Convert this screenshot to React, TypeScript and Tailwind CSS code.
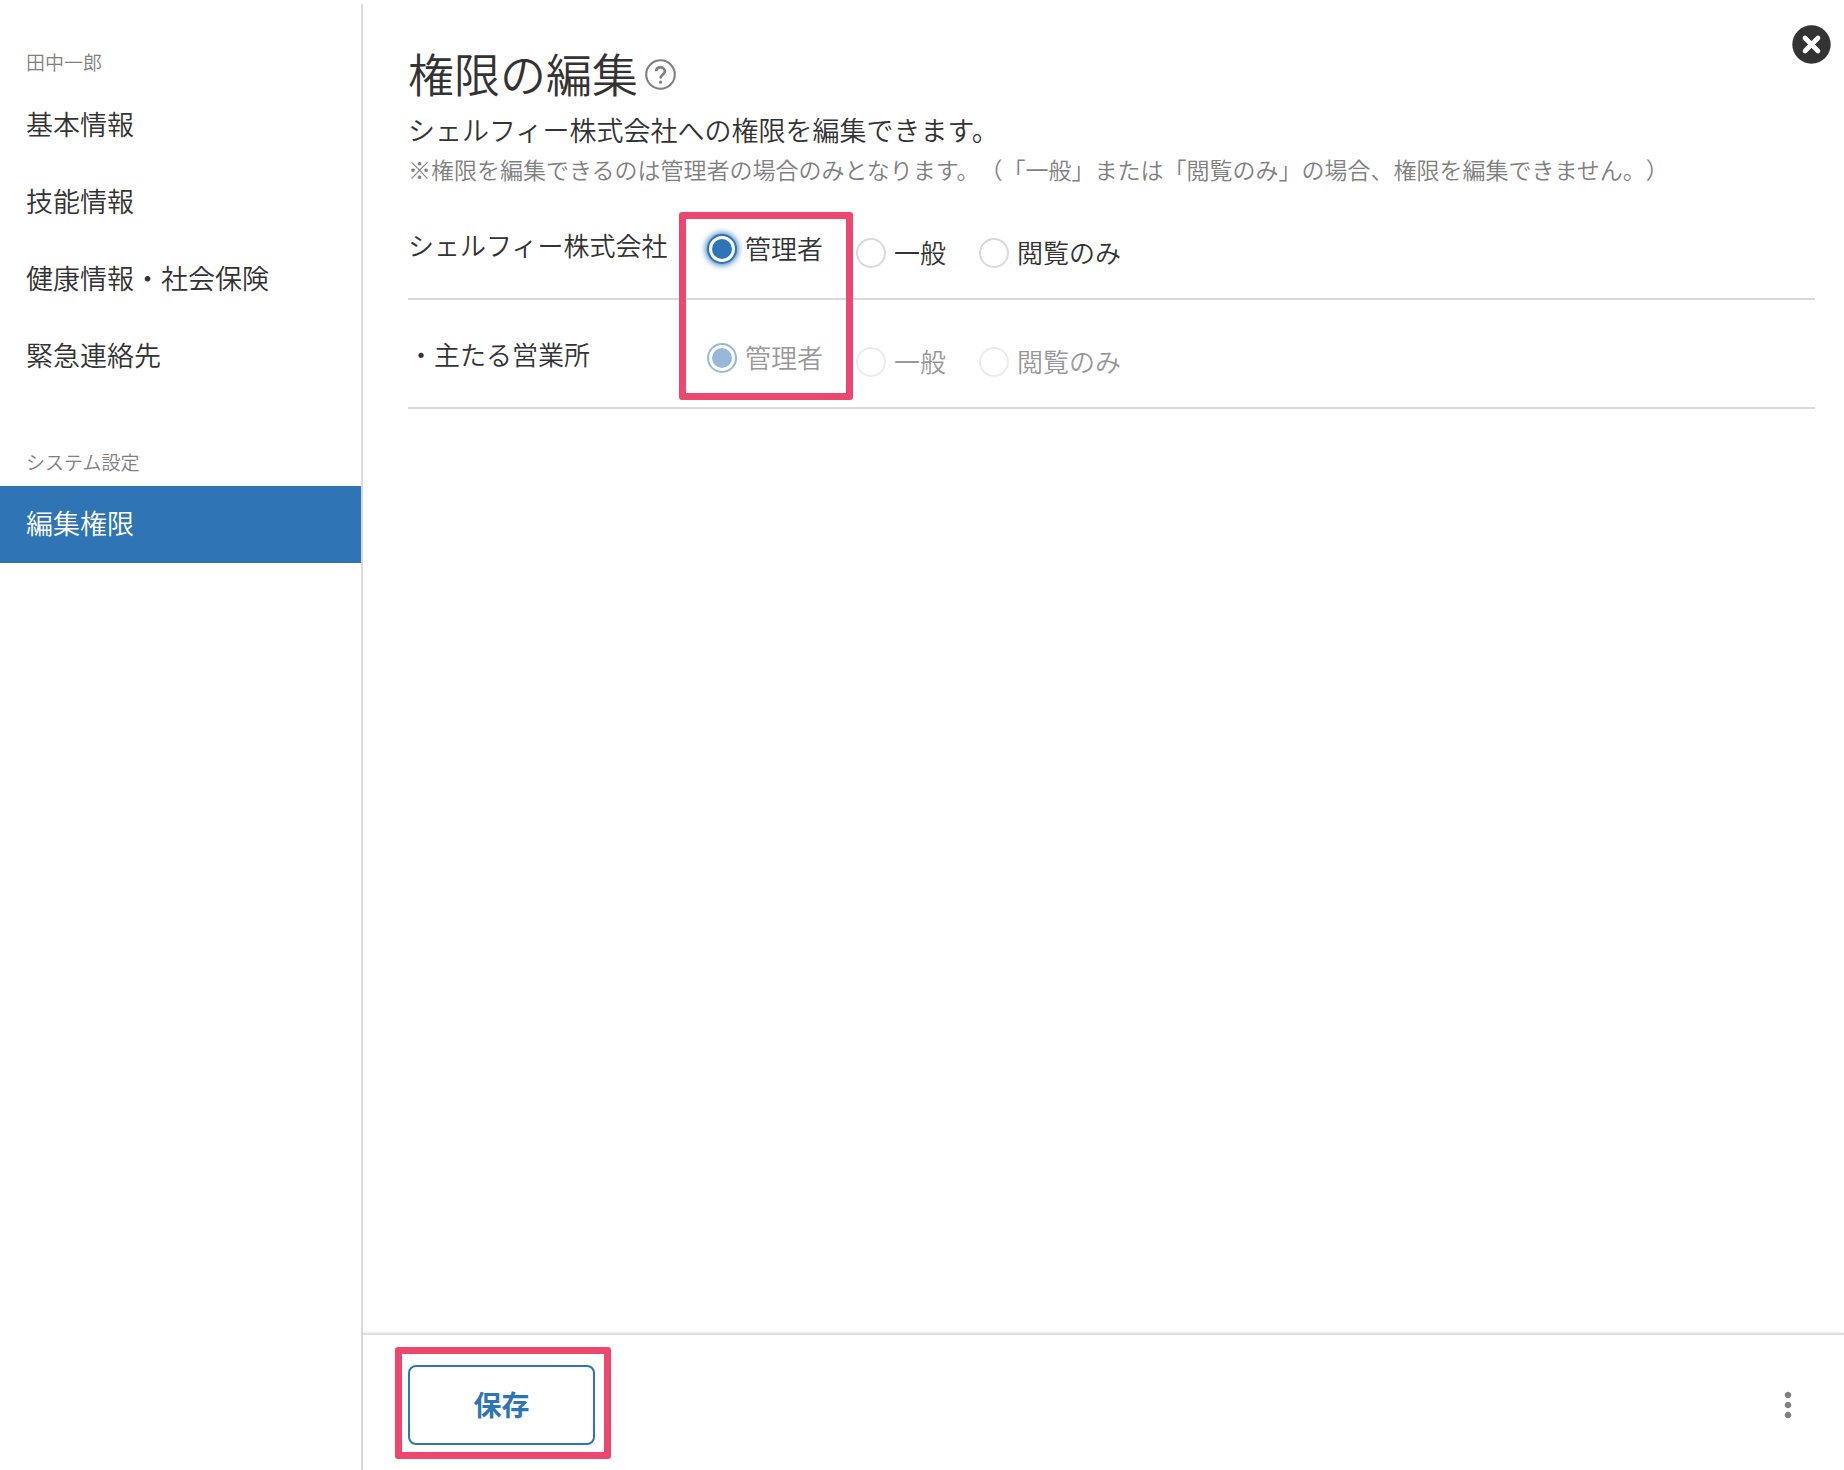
import { useState } from "react";
import { MdMoreVert } from "react-icons/md";

const profileItems = ["基本情報", "技能情報", "健康情報・社会保険", "緊急連絡先"];
const roles = ["管理者", "一般", "閲覧のみ"];

function HelpIcon() {
  return (
    <svg viewBox="0 0 37 37" className="size-[37px]" fill="none" stroke="currentColor">
      <circle cx="18.5" cy="18.5" r="14.3" strokeWidth="2.1" />
      <path
        d="M14.2 15.2C14.2 12.9 16 11.4 18.5 11.4S22.9 12.9 22.9 15.2C22.9 18.3 18.5 18.8 18.5 22.4"
        strokeWidth="2.7"
      />
      <circle cx="18.5" cy="26.2" r="1.6" fill="currentColor" stroke="none" />
    </svg>
  );
}

function NavItem({ label, active = false }: { label: string; active?: boolean }) {
  return (
    <li>
      <a
        href="#"
        aria-current={active ? "page" : undefined}
        className={
          active
            ? "flex h-[77px] items-center bg-[#2f75b5] px-[26px] pb-1 text-[27px] leading-9 text-white"
            : "flex h-[77px] items-center px-[26px] pb-1 text-[27px] leading-9 text-[#333]"
        }
      >
        {label}
      </a>
    </li>
  );
}

function Sidebar() {
  return (
    <nav className="mt-1 w-[363px] shrink-0 border-r-2 border-[#d9d9d9] pt-[46px]">
      <h2 className="mb-[13px] px-[26px] text-[19px] leading-6 text-[#808080]">田中一郎</h2>
      <ul>
        {profileItems.map((item) => (
          <NavItem key={item} label={item} />
        ))}
      </ul>
      <h2 className="mt-[55px] mb-3 px-[26px] text-[19px] leading-6 text-[#808080]">システム設定</h2>
      <ul>
        <NavItem label="編集権限" active />
      </ul>
    </nav>
  );
}

function PermissionRow({
  name,
  group,
  value,
  onChange,
  focused = false,
  disabled = false,
}: {
  name: string;
  group: string;
  value: string;
  onChange?: (role: string) => void;
  focused?: boolean;
  disabled?: boolean;
}) {
  return (
    <div className="flex h-[109px] items-start border-b-2 border-[#d9d9d9] pt-9 text-[26px] leading-9">
      <div id={`${group}-name`} className="w-[299px] shrink-0">
        {name}
      </div>
      <div
        role="radiogroup"
        aria-labelledby={`${group}-name`}
        className={disabled ? "flex items-start gap-[33px] pt-1 opacity-50" : "flex items-start gap-[33px] pt-1"}
      >
        {roles.map((role) => (
          <label
            key={role}
            className={role === value ? "flex h-9 items-center gap-2" : "mt-1 flex h-9 items-center gap-2"}
          >
            <input
              type="radio"
              name={group}
              value={role}
              checked={role === value}
              disabled={disabled}
              onChange={() => onChange?.(role)}
              className={
                role !== value
                  ? "size-[30px] shrink-0 appearance-none rounded-full border-2 border-[#d9d9d9] bg-white"
                  : focused
                    ? "size-[30px] shrink-0 appearance-none rounded-full border-2 border-[#2f75b5] bg-[#2f75b5] bg-clip-content p-[3px] shadow-[0_0_6px_1px_#2f75b5]"
                    : "size-[30px] shrink-0 appearance-none rounded-full border-2 border-[#2f75b5] bg-[#2f75b5] bg-clip-content p-[3px]"
              }
            />
            <span className="pb-0.5">{role}</span>
          </label>
        ))}
      </div>
    </div>
  );
}

export default function App() {
  const [role, setRole] = useState("管理者");

  return (
    <div
      lang="ja"
      className="flex min-h-screen bg-white font-['Noto_Sans_CJK_JP',sans-serif] font-[350] text-[#333] [text-spacing-trim:space-all]"
    >
      <Sidebar />
      <div className="relative flex min-w-0 flex-1 flex-col">
        <button type="button" aria-label="閉じる" className="absolute top-[25px] right-[13px] size-[39px]">
          <svg viewBox="0 0 39 39" className="size-full">
            <circle cx="19.5" cy="19.5" r="19.2" fill="#333" />
            <path d="M13 13L26 26M26 13L13 26" stroke="#fff" strokeWidth="4.6" strokeLinecap="round" />
          </svg>
        </button>

        <main className="flex-1 pt-[46px] pr-[29px] pl-[45px]">
          <div className="flex items-center gap-1">
            <h1 className="pb-1 text-[46px] leading-[52px]">権限の編集</h1>
            <button type="button" aria-label="ヘルプ" className="text-[#808080]">
              <HelpIcon />
            </button>
          </div>
          <p className="mt-[10px] text-[27px] leading-9">シェルフィー株式会社への権限を編集できます。</p>
          <p className="mt-[5px] text-[23px] leading-8 text-[#808080]">
            ※権限を編集できるのは管理者の場合のみとなります。（「一般」または「閲覧のみ」の場合、権限を編集できません。）
          </p>
          <div className="relative mt-1.5">
            <PermissionRow name="シェルフィー株式会社" group="company" value={role} onChange={setRole} focused />
            <PermissionRow name="・主たる営業所" group="office" value={role} disabled />
            <div className="pointer-events-none absolute top-[21px] left-[271px] h-[188px] w-[174px] rounded-[3px] border-[7px] border-[#ed476e]" />
          </div>
        </main>

        <footer className="flex h-[137px] items-center justify-between border-t-2 border-[#dedede] pt-1 pr-9 pl-[45px] shadow-[0_-1px_2px_rgba(0,0,0,0.08)]">
          <div className="relative">
            <button
              type="button"
              className="h-20 w-[187px] rounded-lg border-2 border-[#2f75b5] pb-0.5 text-[28px] leading-9 font-bold text-[#2f75b5]"
            >
              保存
            </button>
            <div className="pointer-events-none absolute -top-[18px] -right-4 -bottom-[14px] -left-[13px] rounded-[3px] border-[7px] border-[#ed476e]" />
          </div>
          <button type="button" aria-label="メニュー" className="text-[#808080]">
            <MdMoreVert className="size-10" />
          </button>
        </footer>
      </div>
    </div>
  );
}
